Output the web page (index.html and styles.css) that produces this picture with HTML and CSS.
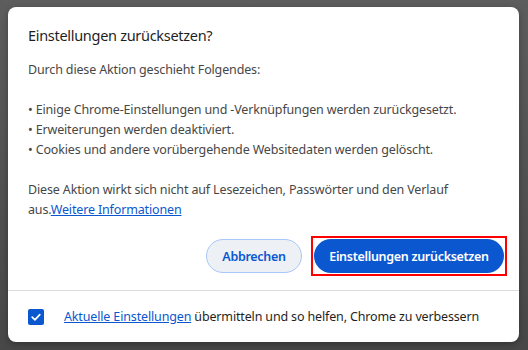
FILE: index.html
```html
<!DOCTYPE html>
<html lang="de">
<head>
<meta charset="utf-8">
<title>Einstellungen zurücksetzen</title>
<link rel="stylesheet" href="styles.css">
</head>
<body>
<div class="dialog">
  <h1 class="title">Einstellungen zurücksetzen?</h1>
  <div class="body">
    <p>Durch diese Aktion geschieht Folgendes:</p>
    <ul class="list">
      <li>• Einige Chrome-Einstellungen und -Verknüpfungen werden zurückgesetzt.</li>
      <li>• Erweiterungen werden deaktiviert.</li>
      <li>• Cookies und andere vorübergehende Websitedaten werden gelöscht.</li>
    </ul>
    <p>Diese Aktion wirkt sich nicht auf Lesezeichen, Passwörter und den Verlauf aus.<a href="#" class="link">Weitere Informationen</a></p>
  </div>
  <div class="actions">
    <button class="btn btn-cancel">Abbrechen</button>
    <div class="highlight">
      <button class="btn btn-primary">Einstellungen zurücksetzen</button>
    </div>
  </div>
  <div class="footer">
    <span class="checkbox">
      <svg width="16" height="16" viewBox="0 0 16 16"><path d="M4.2 8.2 L6.9 10.8 L11.8 5.6" fill="none" stroke="#fff" stroke-width="1.7" stroke-linecap="round" stroke-linejoin="round"/></svg>
    </span>
    <span class="footer-text"><a href="#" class="link">Aktuelle Einstellungen</a> übermitteln und so helfen, Chrome zu verbessern</span>
  </div>
</div>
</body>
</html>
```
FILE: styles.css
```css
html, body {
  margin: 0;
  padding: 0;
}
body {
  width: 528px;
  height: 350px;
  background: linear-gradient(#5d5d5d, #474747);
  font-family: "Noto Sans", "Open Sans", sans-serif;
  overflow: hidden;
  padding-top: 7px;
  box-sizing: border-box;
}
.dialog {
  margin-left: 8px;
  width: 511px;
  height: 335px;
  background: #fff;
  border-radius: 8px;
  box-shadow: 0 2px 6px rgba(0,0,0,0.3);
  padding-top: 17px;
  box-sizing: border-box;
  display: flex;
  flex-direction: column;
}
.title {
  margin: 0 20px;
  font-size: 14.5px;
  letter-spacing: -0.3px;
  font-weight: 400;
  line-height: 22px;
  color: #1f1f1f;
}
.body {
  margin-top: 14px;
  padding: 0 20px;
  font-size: 12.5px;
  letter-spacing: -0.15px;
  line-height: 20px;
  color: #474747;
}
.body p {
  margin: 0;
}
.list {
  list-style: none;
  margin: 20px 0;
  padding: 0;
}
.link {
  color: #0b57d0;
  text-decoration: underline;
}
.actions {
  margin-top: 16px;
  display: flex;
  justify-content: flex-end;
  align-items: center;
  gap: 9px;
  padding-right: 12px;
}
.highlight {
  border: 2px solid #ff0000;
  padding: 1px;
  display: flex;
}
.btn {
  height: 34px;
  border-radius: 17px;
  font-family: inherit;
  font-size: 12.5px;
  letter-spacing: -0.3px;
  font-weight: 600;
  padding: 0;
  white-space: nowrap;
  cursor: pointer;
}
.btn-cancel {
  width: 96px;
  background: #edf0f5;
  border: 1px solid #a8c7fa;
  color: #0b57d0;
}
.btn-primary {
  width: 190px;
  background: #0b57d0;
  border: none;
  color: #fff;
}
.footer {
  margin-top: 14px;
  border-top: 1px solid #dcdcdc;
  flex: 1;
  display: flex;
  align-items: center;
  padding-left: 20px;
  gap: 20px;
  font-size: 12.5px;
  letter-spacing: -0.15px;
  color: #1f1f1f;
}
.checkbox {
  width: 16px;
  height: 16px;
  border-radius: 2px;
  background: #0b57d0;
  display: flex;
}
```
